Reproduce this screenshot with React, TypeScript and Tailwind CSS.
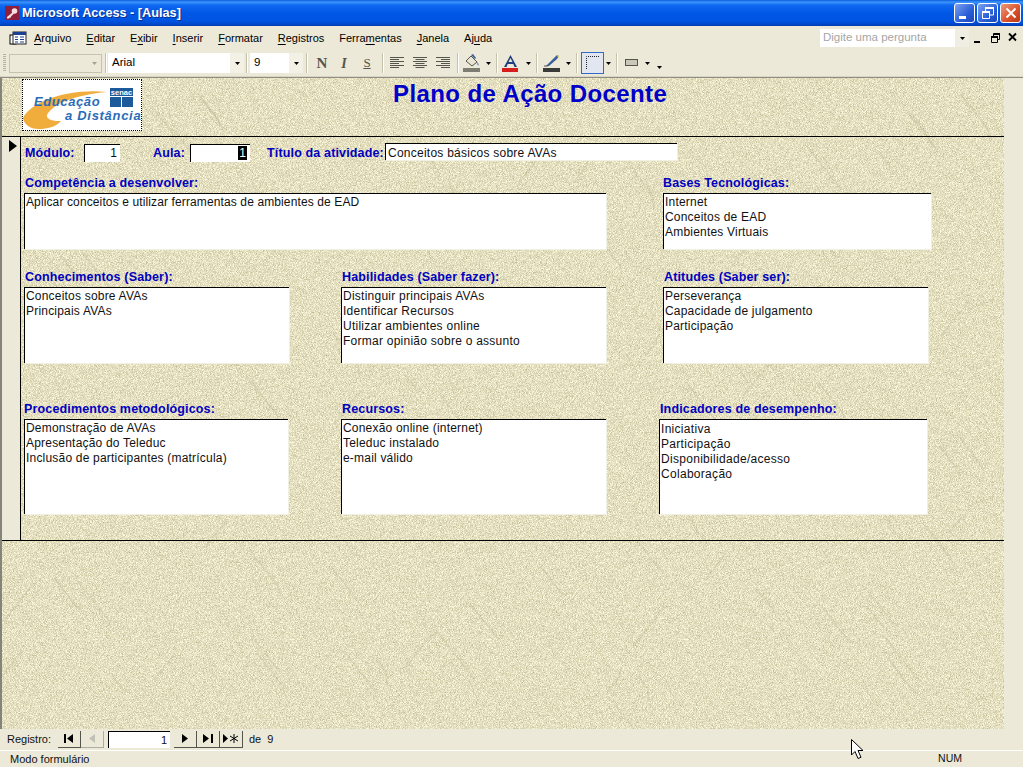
import { ReactNode } from "react"

// paper cracks on the form background
const cracks: string[] = (() => {
  const out: string[] = []
  let seed = 7
  const rnd = () => {
    seed = (seed * 16807) % 2147483647
    return seed / 2147483647
  }
  for (let i = 0; i < 90; i++) {
    const x = rnd() * 1000
    const y = rnd() * 650
    const len = 15 + rnd() * 40
    const dir = rnd() > 0.3 ? 1 : -1
    out.push(`M${x} ${y}l${len * 0.55} ${dir * len * 0.7}l${rnd() * 8} ${dir * rnd() * 14}`)
  }
  return out
})()

function Paper() {
  return (
    <svg className="absolute inset-0 h-full w-full" aria-hidden="true">
      <filter id="grain" x="0" y="0" width="100%" height="100%" colorInterpolationFilters="sRGB">
        <feTurbulence type="fractalNoise" baseFrequency="1.3" numOctaves="1" seed="4" />
        <feColorMatrix
          type="matrix"
          values="0 0 0 0.5 0.645  0 0 0 0.5 0.625  0 0 0 0.6 0.45  0 0 0 0 1"
        />
      </filter>
      <rect width="100%" height="100%" filter="url(#grain)" />
      <g fill="none" stroke="#b9b48c" strokeOpacity="0.25" strokeWidth="2">
        {cracks.map((d, i) => (
          <path key={i} d={d} />
        ))}
      </g>
    </svg>
  )
}

function U({ children }: { children: ReactNode }) {
  return <span className="underline underline-offset-2">{children}</span>
}

function Menu() {
  return (
    <div className="flex h-[24px] items-center bg-[#ece9d8] text-[11px] text-black">
      <svg width="18" height="17" viewBox="0 0 18 17" className="ml-[9px] mr-[7px] -mt-[2px]">
        <rect x="1" y="6" width="6" height="9" fill="#fff" stroke="#000" />
        <rect x="4" y="3" width="13" height="12" fill="#fff" stroke="#222" />
        <rect x="4" y="3" width="13" height="3" fill="#1c3f94" />
        <path d="M6 8h3M11 8h4M6 10.500h3M11 10.500h4M6 13h3M11 13h4" stroke="#1c3f94" />
      </svg>
      <div className="flex gap-[15px] pt-[1px]">
        <span><U>A</U>rquivo</span>
        <span><U>E</U>ditar</span>
        <span>E<U>x</U>ibir</span>
        <span><U>I</U>nserir</span>
        <span><U>F</U>ormatar</span>
        <span><U>R</U>egistros</span>
        <span>Ferra<U>m</U>entas</span>
        <span><U>J</U>anela</span>
        <span>Aj<U>u</U>da</span>
      </div>
      <div className="ml-auto flex items-center">
        <div className="flex h-[18px] w-[135px] items-center bg-white pl-[3px] text-[11.5px] text-[#a6a6a6]">
          Digite uma pergunta
        </div>
        <div className="flex h-[18px] w-[14px] items-center justify-center bg-[#f0eee2]">
          <Caret />
        </div>
        <svg width="52" height="14" viewBox="0 0 52 14" className="ml-[2px]">
          <path d="M3 10h6v2H3z" fill="#000" />
          <path d="M20.500 5.500h6v6h-6zM22.500 5V2.500h6v6H27" fill="none" stroke="#000" />
          <path d="M20 5h7v2h-7zM23 2h6v2h-6z" fill="#000" />
          <path d="M38 2.500l7 7M45 2.500l-7 7" stroke="#000" strokeWidth="1.800" />
        </svg>
      </div>
    </div>
  )
}

function Caret({ color = "#000" }: { color?: string }) {
  return (
    <svg width="5" height="3" viewBox="0 0 5 3">
      <path d="M0 0h5L2.500 3z" fill={color} />
    </svg>
  )
}

function Sep({ className }: { className: string }) {
  return <div className={`h-[20px] w-[2px] border-r border-white bg-[#c5c2b0] ${className}`} />
}

function AlignIcon({ kind }: { kind: "l" | "c" | "r" }) {
  const rows = [14, 9, 14, 9, 14, 9]
  return (
    <svg width="14" height="12" viewBox="0 0 14 12">
      {rows.map((w, i) => {
        const x = kind === "l" ? 0 : kind === "r" ? 14 - w : (14 - w) / 2
        return <rect key={i} x={x} y={i * 2} width={w} height="1" fill="#55554c" />
      })}
    </svg>
  )
}

function Toolbar() {
  return (
    <div className="flex h-[26px] items-center bg-[#ece9d8] text-[11px] text-black">
      <div className="ml-[3px] h-[18px] w-[3px] bg-[repeating-linear-gradient(180deg,#b5b29f_0,#b5b29f_1px,#ece9d8_1px,#ece9d8_2px)]" />
      <div className="ml-[3px] flex h-[19px] w-[93px] items-center justify-end border border-[#c5c2b0] pr-[4px]">
        <Caret color="#a5a295" />
      </div>
      <Sep className="ml-[3px]" />
      <div className="ml-[1px] flex h-[20px] w-[136px] items-center bg-white pl-[4px] text-[11.5px]">
        Arial
        <span className="ml-auto flex h-full w-[14px] items-center justify-center bg-[#f3f1e6]">
          <Caret />
        </span>
      </div>
      <Sep className="ml-[2px]" />
      <div className="ml-[2px] flex h-[20px] w-[53px] items-center bg-white pl-[4px] text-[11.5px]">
        9
        <span className="ml-auto flex h-full w-[14px] items-center justify-center bg-[#f3f1e6]">
          <Caret />
        </span>
      </div>
      <Sep className="ml-[3px]" />
      <span className="ml-[7px] w-[14px] text-center font-['Liberation_Serif',serif] text-[15px] font-bold text-[#55554c]">
        N
      </span>
      <span className="ml-[8px] w-[14px] text-center font-['Liberation_Serif',serif] text-[14px] font-bold italic text-[#55554c]">
        I
      </span>
      <span className="ml-[9px] w-[14px] text-center font-['Liberation_Serif',serif] text-[13px] text-[#55554c] underline">
        S
      </span>
      <Sep className="ml-[8px]" />
      <div className="ml-[6px] flex gap-[9px]">
        <AlignIcon kind="l" />
        <AlignIcon kind="c" />
        <AlignIcon kind="r" />
      </div>
      <Sep className="ml-[7px]" />
      <svg width="18" height="18" viewBox="0 0 18 18" className="ml-[4px]">
        <path d="M3 7l5-5 6 6-5 4z" fill="#e8e5d5" stroke="#55554c" />
        <path d="M8 1l2-1 3 4-1 1z" fill="#3b5f9a" />
        <path d="M14 8c1.500 1 2 3 1.500 3.500s-1.500-1-1.500-3.500z" fill="#5f7fae" />
        <rect x="0" y="14" width="17" height="4" fill="#7d7d72" />
      </svg>
      <span className="ml-[5px] flex"><Caret /></span>
      <Sep className="ml-[5px]" />
      <svg width="17" height="18" viewBox="0 0 17 18" className="ml-[4px]">
        <path d="M2 13L8.500 1 15 13h-2.500l-1.200-3H5.700l-1.200 3zM6.500 8h4L8.500 4z" fill="#1f3f7f" fillRule="evenodd" />
        <rect x="0" y="14" width="16" height="4" fill="#d51f1f" />
      </svg>
      <span className="ml-[7px] flex"><Caret /></span>
      <Sep className="ml-[5px]" />
      <svg width="18" height="18" viewBox="0 0 18 18" className="ml-[5px]">
        <path d="M3 12l8-8 3-3 2 1-2 3-8 7z" fill="#3b5f9a" />
        <path d="M14 1l2 1-1 2z" fill="#e8d83a" />
        <path d="M1 12h4" stroke="#55554c" />
        <rect x="0" y="14" width="17" height="4" fill="#3a3a36" />
      </svg>
      <span className="ml-[5px] flex"><Caret /></span>
      <Sep className="ml-[5px]" />
      <div className="ml-[3px] flex h-[22px] w-[23px] items-center justify-center border border-[#316ac5] bg-[#e1e6f0]">
        <svg width="14" height="14" viewBox="0 0 14 14">
          <path d="M0.500 13V0.500H13.500" fill="none" stroke="#222" strokeDasharray="1 1" />
        </svg>
      </div>
      <span className="ml-[2px] flex"><Caret /></span>
      <Sep className="ml-[5px]" />
      <svg width="14" height="8" viewBox="0 0 14 8" className="ml-[7px]">
        <rect x="0.500" y="0.500" width="12" height="6" fill="#c9c7ba" stroke="#55554c" />
      </svg>
      <span className="ml-[6px] flex"><Caret /></span>
      <span className="ml-[7px] mt-[9px] flex"><Caret /></span>
    </div>
  )
}

function Box({ className, lines }: { className: string; lines: string[] }) {
  return (
    <div
      className={`overflow-hidden border-t border-l border-t-black border-l-black bg-white pl-[1px] text-[12px] leading-[15px] text-[#111] shadow-[1px_1px_0_#f2f0e2] ${className}`}
    >
      {lines.map((l) => (
        <div key={l}>{l}</div>
      ))}
    </div>
  )
}

function Label({ children, className = "" }: { children: ReactNode; className?: string }) {
  return (
    <div className={`whitespace-nowrap text-[12.5px] font-bold leading-[16px] tracking-[0.15px] text-[#0000c0] ${className}`}>
      {children}
    </div>
  )
}

function Field({
  label,
  lines,
  className,
  boxClass,
  labelClass = "",
}: {
  label: string
  lines: string[]
  className: string
  boxClass: string
  labelClass?: string
}) {
  return (
    <div className={className}>
      <Label className={`h-[18px] ${labelClass}`}>{label}</Label>
      <Box className={boxClass} lines={lines} />
    </div>
  )
}

function Logo() {
  return (
    <div className="ml-[20px] mt-[1px] h-[52px] w-[120px] border border-dotted border-black bg-white">
      <svg width="118" height="50" viewBox="0 0 118 50">
        <path d="M0 38C8 22 44 8 84 12 54 15 34 22 26 32c-3 3-3 6 2 8 3 1 6 1 10 1-5 6-14 8-22 8C6 49 1 44 0 38z" fill="#f0ad3c" />
        <rect x="87" y="8" width="23" height="8" fill="#1c5a9c" />
        <text x="98.500" y="15" textAnchor="middle" fontFamily="Liberation Sans" fontSize="7.500" fontWeight="700" fill="#fff">senac</text>
        <rect x="87" y="17" width="11" height="10" fill="#1c5a9c" />
        <rect x="99" y="17" width="11" height="10" fill="#1c5a9c" />
        <text x="11" y="26" fontFamily="Liberation Sans" fontSize="13" letterSpacing="0.6" fontWeight="700" fontStyle="italic" fill="#2a6cb8">Educação</text>
        <text x="42" y="40" fontFamily="Liberation Sans" fontSize="13" letterSpacing="0.7" fontWeight="700" fontStyle="italic" fill="#2a6cb8">a Distância</text>
      </svg>
    </div>
  )
}

function FormArea() {
  return (
    <div className="relative flex-1 overflow-hidden font-['Liberation_Sans',Arial,sans-serif]">
      <Paper />
      <div className="relative">
        {/* cabeçalho */}
        <div className="flex h-[59px] border-b border-black">
          <Logo />
          <h1 className="ml-[251px] mt-[2px] whitespace-nowrap text-[24px] font-bold leading-[28px] tracking-[0.4px] text-[#0000c8]">
            Plano de Ação Docente
          </h1>
        </div>
        {/* detalhe */}
        <div className="flex h-[404px] border-b border-black">
          <div className="w-[19px] shrink-0 border-r border-black bg-[#ece9d8] pl-[7px] pt-[3px]">
            <svg width="9" height="12" viewBox="0 0 9 12">
              <path d="M0 0l8 6-8 6z" fill="#000" />
            </svg>
          </div>
          <div className="min-w-0 flex-1">
            <div className="flex h-[25px] pt-[7px]">
              <Label className="ml-[4px] w-[59px] pt-[1px] tracking-[0.4px]">Módulo:</Label>
              <div className="h-[18px] w-[36px] border-t border-l border-t-black border-l-black bg-white pr-[3px] text-right text-[12px] leading-[17px] text-[#111]">
                1
              </div>
              <Label className="ml-[33px] w-[37px] pt-[1px]">Aula:</Label>
              <div className="h-[18px] w-[60px] border-t border-l border-t-black border-l-black bg-white pr-[3px] text-right text-[12px] leading-[17px]">
                <span className="bg-black px-[1px] text-white">1</span>
              </div>
              <Label className="ml-[17px] w-[118px] pt-[1px]">Título da atividade:</Label>
              <Box className="-mt-[1px] h-[17px] w-[292px] pl-[2px] pt-[2px] tracking-[0.25px]" lines={["Conceitos básicos sobre AVAs"]} />
            </div>
            <div className="mt-[13px] flex">
              <Field
                className="ml-[3px] w-[583px]"
                label="Competência a desenvolver:"
                labelClass="pl-[1px]"
                lines={["Aplicar conceitos e utilizar ferramentas de ambientes de EAD"]}
                boxClass="h-[56px] w-[582px] pt-[1px] tracking-[0.12px]"
              />
              <Field
                className="ml-[56px] w-[268px]"
                label="Bases Tecnológicas:"
                lines={["Internet", "Conceitos de EAD", "Ambientes Virtuais"]}
                boxClass="h-[56px] w-[268px] pt-[1px] tracking-[0.2px]"
              />
            </div>
            <div className="mt-[20px] flex">
              <Field
                className="ml-[3px] w-[265px]"
                label="Conhecimentos (Saber):"
                labelClass="pl-[1px]"
                lines={["Conceitos sobre AVAs", "Principais AVAs"]}
                boxClass="h-[76px] w-[265px] pt-[1px] tracking-[0.2px]"
              />
              <Field
                className="ml-[52px] w-[265px]"
                label="Habilidades (Saber fazer):"
                labelClass="pl-[1px]"
                lines={["Distinguir principais AVAs", "Identificar Recursos", "Utilizar ambientes online", "Formar opinião sobre o assunto"]}
                boxClass="h-[76px] w-[265px] pt-[1px] tracking-[0.25px]"
              />
              <Field
                className="ml-[57px] w-[265px]"
                label="Atitudes (Saber ser):"
                labelClass="pl-[1px]"
                lines={["Perseverança", "Capacidade de julgamento", "Participação"]}
                boxClass="h-[76px] w-[265px] pt-[1px] tracking-[0.2px]"
              />
            </div>
            <div className="mt-[38px] flex">
              <Field
                className="ml-[3px] w-[264px]"
                label="Procedimentos metodológicos:"
                lines={["Demonstração de AVAs", "Apresentação do Teleduc", "Inclusão de participantes (matrícula)"]}
                boxClass="h-[95px] w-[264px] pt-[1px] tracking-[0.2px]"
              />
              <Field
                className="ml-[53px] w-[265px]"
                label="Recursos:"
                labelClass="pl-[1px]"
                lines={["Conexão online (internet)", "Teleduc instalado", "e-mail válido"]}
                boxClass="h-[95px] w-[265px] pt-[1px] tracking-[0.2px]"
              />
              <Field
                className="ml-[53px] w-[268px]"
                label="Indicadores de desempenho:"
                labelClass="pl-[1px]"
                lines={["Iniciativa", "Participação", "Disponibilidade/acesso", "Colaboração"]}
                boxClass="h-[95px] w-[268px] pt-[2px] tracking-[0.3px]"
              />
            </div>
          </div>
        </div>
      </div>
    </div>
  )
}

function NavBtn({ children, off = false }: { children: ReactNode; off?: boolean }) {
  return (
    <div className={`flex h-[17px] w-[23px] items-center justify-center border-r border-b border-r-[#55554c] border-b-[#55554c] bg-[#ece9d8] ${off ? "opacity-40" : ""}`}>
      {children}
    </div>
  )
}

export default function App() {
  return (
    <div className="relative flex h-[767px] w-[1023px] flex-col overflow-hidden bg-[#ece9d8] font-['Liberation_Sans',Arial,sans-serif]">
      {/* barra de título */}
      <div className="flex h-[26px] shrink-0 items-center bg-[linear-gradient(180deg,#0a5cd6_0%,#3d95ff_8%,#0f68ee_20%,#0057e6_50%,#0054e2_80%,#0048cc_92%,#003cae_100%)] pl-[5px]">
        <svg width="14" height="14" viewBox="0 0 14 14">
          <rect width="14" height="14" fill="#8e1f3c" />
          <circle cx="9.500" cy="5" r="2.800" fill="#f5dfe3" />
          <path d="M8 6L2 11v1.500h2l1-1h1v-1l3-3z" fill="#f5dfe3" />
        </svg>
        <span className="ml-[3px] pt-[2px] text-[12.7px] font-bold text-white [text-shadow:1px_1px_0_#0a2f8f]">
          Microsoft Access - [Aulas]
        </span>
        <div className="ml-auto mr-[2px] flex gap-[2px]">
          <div className="relative h-[20px] w-[21px] rounded-[3px] border border-white bg-[linear-gradient(135deg,#7da2ee,#2a5fd8_60%,#1b45b8)]">
            <div className="absolute bottom-[3px] left-[4px] h-[3px] w-[7px] bg-white" />
          </div>
          <div className="flex h-[20px] w-[21px] items-center justify-center rounded-[3px] border border-white bg-[linear-gradient(135deg,#7da2ee,#2a5fd8_60%,#1b45b8)]">
            <svg width="12" height="12" viewBox="0 0 12 12">
              <path d="M0.500 4.500h7v7h-7zM3.500 4V1h8v7H8" fill="none" stroke="#fff" />
              <path d="M0 4h8v2H0zM3 0h9v2H3z" fill="#fff" />
            </svg>
          </div>
          <div className="flex h-[20px] w-[21px] items-center justify-center rounded-[3px] border border-white bg-[linear-gradient(135deg,#ef9a7c,#d9502a_60%,#b8381a)]">
            <svg width="12" height="12" viewBox="0 0 12 12">
              <path d="M1.500 1.500l9 9M10.500 1.500l-9 9" stroke="#fff" strokeWidth="2" />
            </svg>
          </div>
        </div>
      </div>

      <Menu />
      <Toolbar />
      <div className="h-[2px] shrink-0 border-b border-[#8f8d80] bg-[#d8d5c4]" />

      {/* janela do formulário */}
      <div className="flex h-[651px] shrink-0">
        <div className="w-[2px] shrink-0 bg-[#85847a]" />
        <FormArea />
        <div className="w-[19px] shrink-0 bg-[#ece9d8]" />
      </div>

      {/* navegação de registros */}
      <div className="flex h-[21px] shrink-0 items-center pb-[1px] text-[11px] text-[#111]">
        <span className="ml-[7px] w-[51px]">Registro:</span>
        <NavBtn>
          <svg width="10" height="9" viewBox="0 0 10 9"><path d="M0 0h2v9H0zM9 0v9L3 4.500z" /></svg>
        </NavBtn>
        <NavBtn off>
          <svg width="6" height="9" viewBox="0 0 6 9"><path d="M6 0v9L0 4.500z" fill="#888" /></svg>
        </NavBtn>
        <div className="ml-[4px] h-[17px] w-[62px] border-t border-l border-t-black border-l-black bg-white pr-[3px] text-right leading-[17px]">
          1
        </div>
        <div className="ml-[4px] flex">
          <NavBtn>
            <svg width="6" height="9" viewBox="0 0 6 9"><path d="M0 0v9l6-4.500z" /></svg>
          </NavBtn>
          <NavBtn>
            <svg width="10" height="9" viewBox="0 0 10 9"><path d="M0 0v9l6-4.500zM8 0h2v9H8z" /></svg>
          </NavBtn>
          <NavBtn>
            <svg width="16" height="9" viewBox="0 0 16 9">
              <path d="M0 0v9l5-4.500z" />
              <path d="M11 0v9M7 2l8 5M15 2L7 7" stroke="#000" />
            </svg>
          </NavBtn>
        </div>
        <span className="ml-[6px]">de&nbsp;&nbsp;9</span>
      </div>

      {/* barra de status */}
      <div className="flex h-[17px] shrink-0 items-center border-t border-white pl-[10px] text-[11px] text-[#111]">
        Modo formulário
        <span className="ml-auto mr-[61px] text-[10.500px]">NUM</span>
      </div>

      {/* cursor do mouse */}
      <svg width="13" height="21" viewBox="0 0 13 21" className="absolute left-[851px] top-[739px]">
        <path d="M0.500 0.500v15.500l3.500-3.500 3 7 3-1.200-3-6.800h5z" fill="#fff" stroke="#000" />
      </svg>
    </div>
  )
}
